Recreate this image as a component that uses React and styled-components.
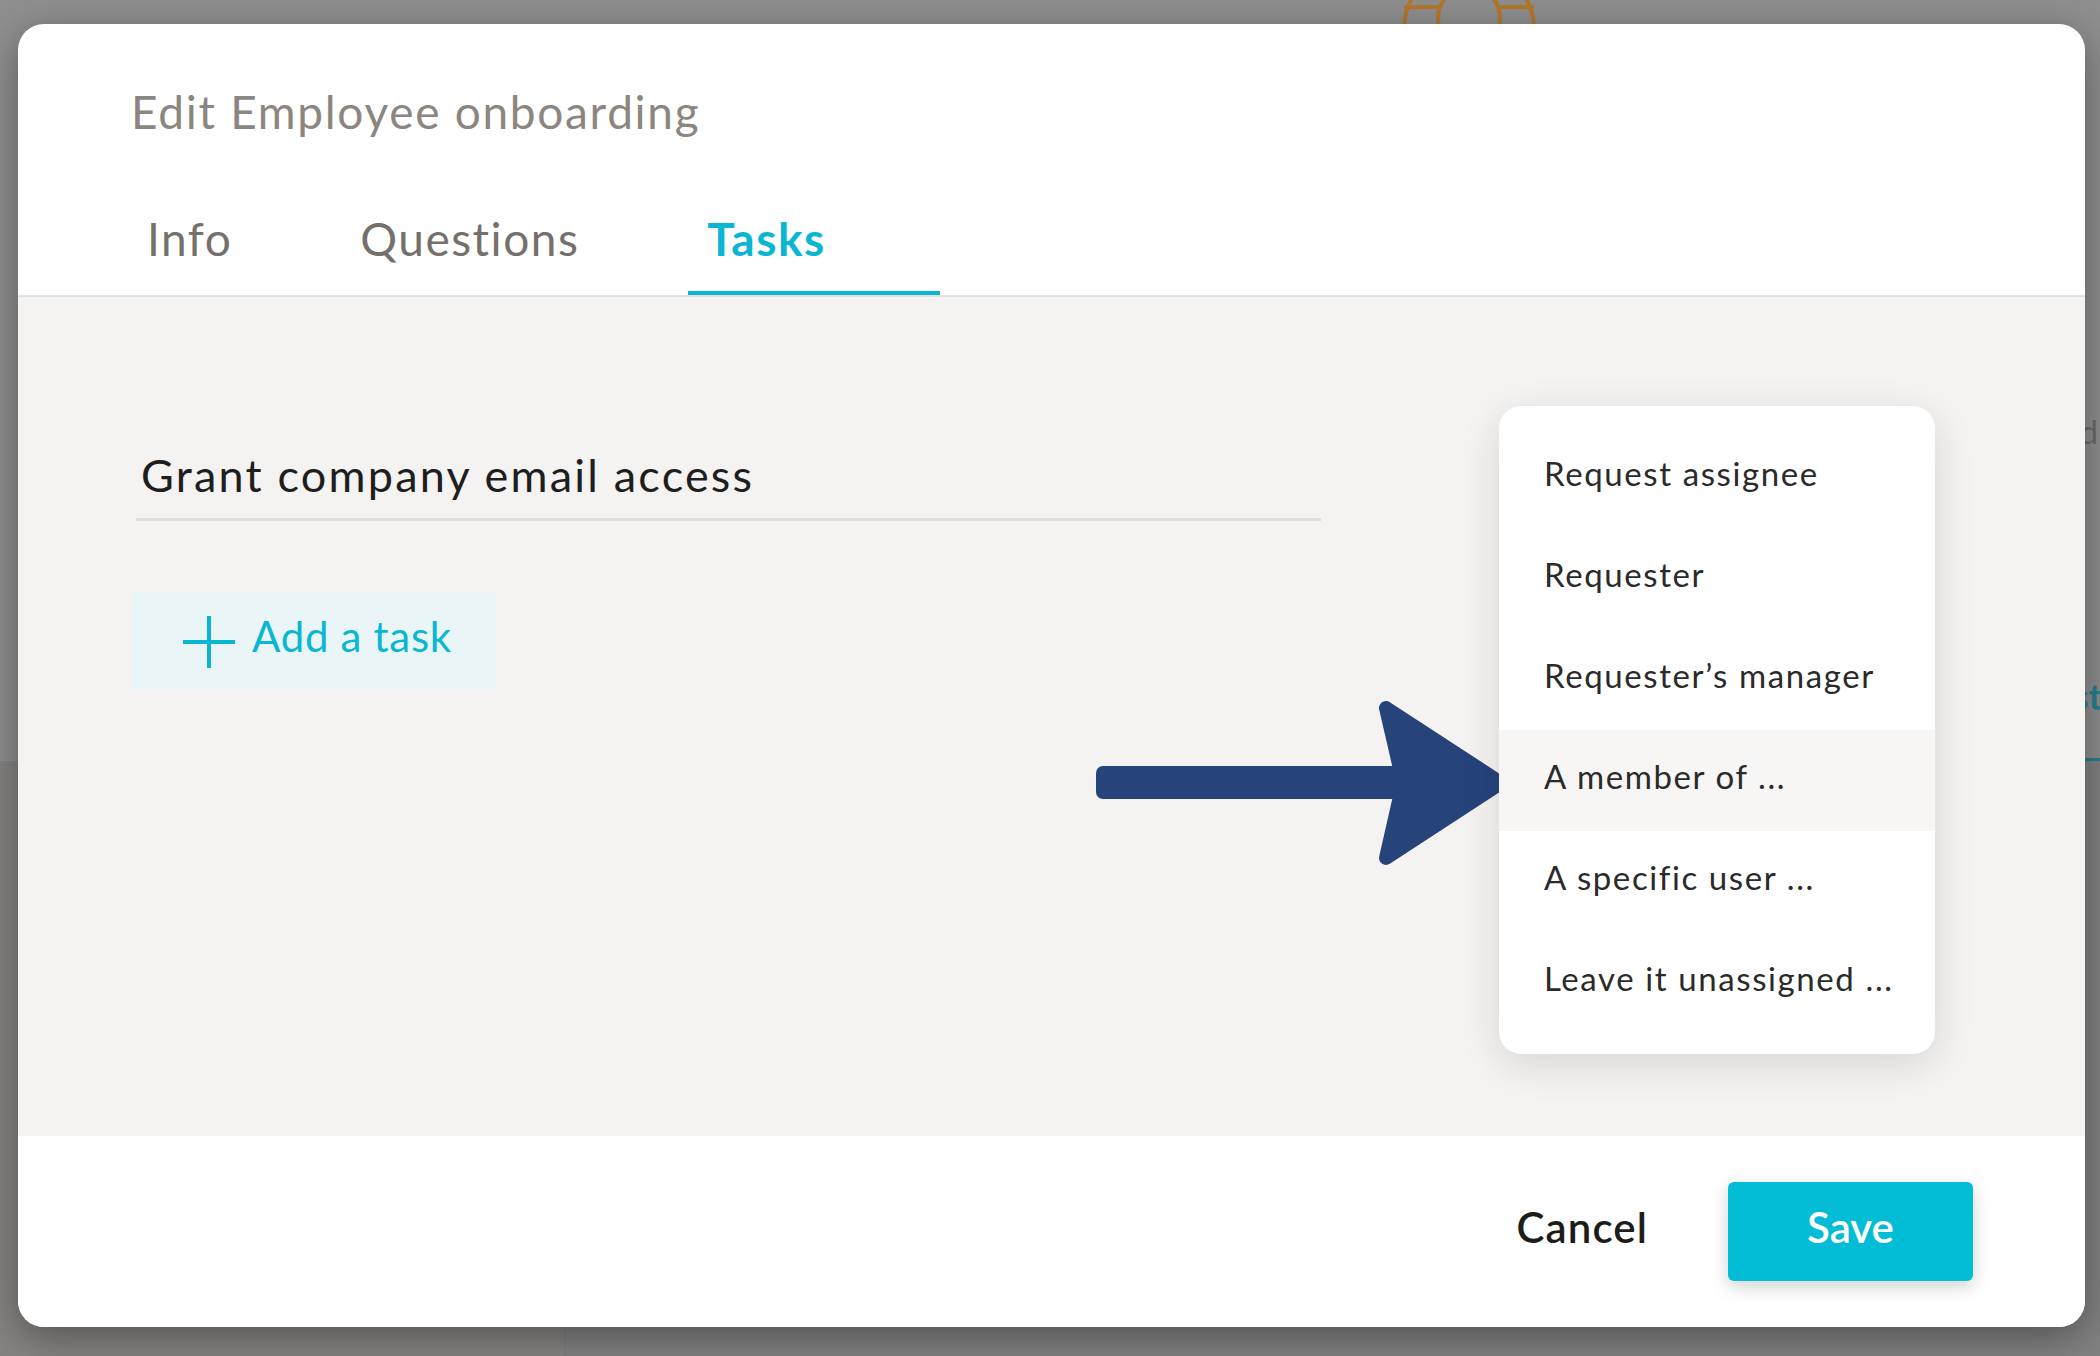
import React from "react";
import styled, { createGlobalStyle } from "styled-components";

const GlobalStyle = createGlobalStyle`
  html, body { margin: 0; padding: 0; }
  body {
    width: 2100px;
    height: 1356px;
    overflow: hidden;
    font-family: Lato, "Open Sans", "Liberation Sans", sans-serif;
  }
  * { box-sizing: border-box; }
`;

const Page = styled.div`
  position: relative;
  width: 2100px;
  height: 1356px;
  overflow: hidden;
  background: #8f8f8f;
  display: flex;
  flex-direction: column;
`;

const BgIconRow = styled.div`
  display: flex;
  height: 24px;
  padding-left: 1400px;
  overflow: hidden;
`;

const BgField = styled.div`
  margin-top: 392px;
  align-self: flex-end;
  margin-right: 2px;
  font: 400 32px/1 Lato, sans-serif;
  color: #6a6a6a;
`;

const BgTab = styled.div`
  margin-top: 230px;
  align-self: flex-end;
  margin-right: -2px;
  padding: 0 0 44px;
  width: 200px;
  text-align: right;
  font: 700 36px/1 Lato, sans-serif;
  color: #27808f;
  border-bottom: 3px solid #27808f;
`;

const BgLower = styled.div`
  flex: 1;
  display: flex;
  background: #838282;
`;

const BgSidebar = styled.div`
  width: 565px;
  background: #858482;
  border-right: 1px solid #7d7c7a;
`;

const Modal = styled.div`
  position: absolute;
  left: 18px;
  top: 24px;
  width: 2067px;
  height: 1303px;
  background: #fff;
  border-radius: 26px;
  box-shadow: 0 10px 40px rgba(0, 0, 0, 0.38);
  display: flex;
  flex-direction: column;
`;

const Header = styled.header`
  padding: 65px 0 0 113px;
  border-bottom: 2px solid #e3e2e1;
`;

const Title = styled.h1`
  margin: 0 0 81px;
  font: 400 46px/1 Lato, sans-serif;
  letter-spacing: 1.7px;
  color: #8c8681;
`;

const Tabs = styled.nav`
  display: flex;
  gap: 90px;
  margin-left: -3px;
`;

const Tab = styled.div`
  position: relative;
  padding: 0 19px 33px;
  font: ${(p) => (p.$active ? 700 : 400)} 46px/1 Lato, sans-serif;
  letter-spacing: 1.5px;
  color: ${(p) => (p.$active ? "#0ab7d2" : "#75706c")};

  &::after {
    content: "";
    display: ${(p) => (p.$active ? "block" : "none")};
    position: absolute;
    left: 0;
    bottom: 0;
    width: 252px;
    height: 4px;
    background: #0ab7d2;
  }
`;

const Body = styled.main`
  position: relative;
  flex: 1;
  background: #f4f3f1;
  padding: 156px 0 0 114px;
`;

const TaskField = styled.div`
  width: 1185px;
  margin-left: 4px;
  padding: 0 0 20px 5px;
  border-bottom: 3px solid #dcdcdc;
  font: 400 45px/1 Lato, sans-serif;
  letter-spacing: 2.2px;
  color: #1e1e1e;
`;

const AddButton = styled.button`
  margin-top: 72px;
  width: 364px;
  height: 98px;
  display: flex;
  align-items: center;
  gap: 17px;
  padding: 0 0 0 51px;
  border: none;
  border-radius: 4px;
  background: #e9f5f6;
  color: #0ab7d2;
  cursor: pointer;
`;

const AddLabel = styled.span`
  font: 400 42px/1 Lato, sans-serif;
  letter-spacing: 0.7px;
  padding-bottom: 12px;
`;

const Menu = styled.ul`
  position: absolute;
  left: 1481px;
  top: 109px;
  width: 436px;
  margin: 0;
  padding: 21px 0;
  list-style: none;
  background: #fff;
  border-radius: 22px;
  box-shadow: 0 10px 40px rgba(0, 0, 0, 0.12);
`;

const MenuItem = styled.li`
  height: 101px;
  display: flex;
  align-items: center;
  padding: 0 0 8px 45px;
  font: 400 33px/1 Lato, sans-serif;
  letter-spacing: 1.6px;
  color: #2a2a2a;
  white-space: nowrap;
  background: ${(p) => (p.$highlight ? "#f7f6f5" : "transparent")};
`;

const ArrowMark = styled.svg`
  position: absolute;
  left: 1072px;
  top: 398px;
`;

const Footer = styled.footer`
  height: 191px;
  display: flex;
  align-items: center;
  justify-content: flex-end;
  gap: 80px;
  padding-right: 112px;
  background: #fff;
  border-radius: 0 0 26px 26px;
`;

const CancelButton = styled.button`
  border: none;
  background: none;
  padding: 0 0 9px;
  font: 600 42px/1 Lato, sans-serif;
  letter-spacing: 1.1px;
  color: #1c1c1c;
  cursor: pointer;
`;

const SaveButton = styled.button`
  width: 245px;
  height: 99px;
  border: none;
  border-radius: 6px;
  padding: 0 0 9px;
  background: #03bcd5;
  color: #fff;
  font: 600 42px/1 Lato, sans-serif;
  box-shadow: 0 6px 18px rgba(0, 0, 0, 0.18);
  cursor: pointer;
`;

const items = [
  "Request assignee",
  "Requester",
  "Requester\u2019s manager",
  "A member of ...",
  "A specific user ...",
  "Leave it unassigned ...",
];

export default function App() {
  return (
    <>
      <GlobalStyle />
      <Page>
        <BgIconRow>
          <svg width="140" height="24" viewBox="0 0 140 24">
            <g fill="none" stroke="#b3782b" strokeWidth="4">
              <circle cx="69" cy="30" r="65" />
              <circle cx="69" cy="18" r="31" />
              <line x1="4" y1="7" x2="40" y2="7" />
              <line x1="98" y1="7" x2="134" y2="7" />
            </g>
          </svg>
        </BgIconRow>
        <BgField>Field</BgField>
        <BgTab>List</BgTab>
        <BgLower>
          <BgSidebar />
        </BgLower>

        <Modal>
          <Header>
            <Title>Edit Employee onboarding</Title>
            <Tabs>
              <Tab>Info</Tab>
              <Tab>Questions</Tab>
              <Tab $active>Tasks</Tab>
            </Tabs>
          </Header>
          <Body>
            <TaskField>Grant company email access</TaskField>
            <AddButton>
              <svg width="52" height="52" viewBox="0 0 52 52">
                <g stroke="#0ab7d2" strokeWidth="4" strokeLinecap="butt">
                  <line x1="26" y1="0" x2="26" y2="52" />
                  <line x1="0" y1="26" x2="52" y2="26" />
                </g>
              </svg>
              <AddLabel>Add a task</AddLabel>
            </AddButton>
            <ArrowMark width="425" height="180" viewBox="0 0 425 180">
              <path
                d="M13 78 L311 78 L296 13 L411 88 L296 163 L311 97 L13 97 Z"
                fill="#26437a"
                stroke="#26437a"
                strokeWidth="14"
                strokeLinejoin="round"
              />
            </ArrowMark>
            <Menu>
              {items.map((t, i) => (
                <MenuItem key={t} $highlight={i === 3}>
                  {t}
                </MenuItem>
              ))}
            </Menu>
          </Body>
          <Footer>
            <CancelButton>Cancel</CancelButton>
            <SaveButton>Save</SaveButton>
          </Footer>
        </Modal>
      </Page>
    </>
  );
}
